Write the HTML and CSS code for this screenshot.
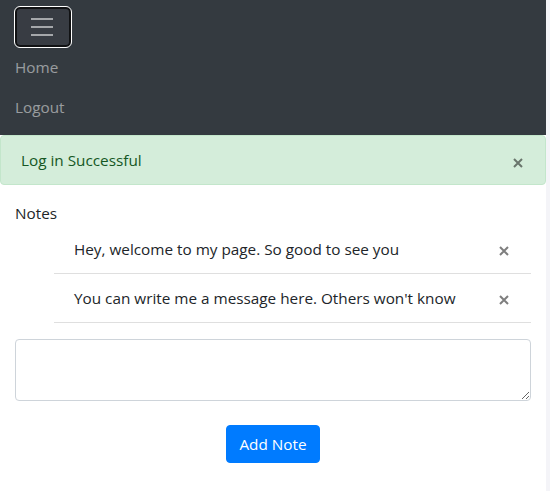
FILE: index.html
```html
<!DOCTYPE html>
<html lang="en">
<head>
<meta charset="utf-8">
<title>Notes</title>
<link rel="stylesheet" href="styles.css">
</head>
<body>
<nav class="navbar">
  <button class="toggler" type="button" aria-label="Toggle navigation">
    <svg class="toggler-icon" width="30" height="30" viewBox="0 0 30 30" aria-hidden="true">
      <path d="M4 7h22M4 15h22M4 23h22" stroke="rgba(255,255,255,0.55)" stroke-width="2" stroke-linecap="butt" fill="none"/>
    </svg>
  </button>
  <ul class="nav-links">
    <li><a class="nav-link" href="#">Home</a></li>
    <li><a class="nav-link" href="#">Logout</a></li>
  </ul>
</nav>
<div class="alert" role="alert">
  <span>Log in Successful</span>
  <button class="close" type="button" aria-label="Close">
    <svg width="10" height="10" viewBox="0 0 10 10" aria-hidden="true"><path d="M1 1L9 9M9 1L1 9" stroke="currentColor" stroke-width="2" fill="none"/></svg>
  </button>
</div>
<main class="container">
  <p class="notes-title">Notes</p>
  <ul class="notes">
    <li class="note"><span>Hey, welcome to my page. So good to see you</span><button class="close" type="button" aria-label="Delete"><svg width="10" height="10" viewBox="0 0 10 10" aria-hidden="true"><path d="M1 1L9 9M9 1L1 9" stroke="currentColor" stroke-width="2" fill="none"/></svg></button></li>
    <li class="note"><span>You can write me a message here. Others won't know</span><button class="close" type="button" aria-label="Delete"><svg width="10" height="10" viewBox="0 0 10 10" aria-hidden="true"><path d="M1 1L9 9M9 1L1 9" stroke="currentColor" stroke-width="2" fill="none"/></svg></button></li>
  </ul>
  <textarea class="note-input" rows="2"></textarea>
  <div class="actions">
    <button class="btn-primary" type="button">Add Note</button>
  </div>
</main>
</body>
</html>
```

FILE: styles.css
```css
html {
  background: #f4f4f8;
}
body {
  margin: 0;
  width: 546px;
  min-height: 491px;
  background: #ffffff;
  font-family: "Open Sans", "Liberation Sans", sans-serif;
  font-size: 15.3px;
  line-height: 24px;
  color: #212529;
}
.navbar {
  background: #343a40;
  display: flex;
  flex-direction: column;
  align-items: flex-start;
  padding: 7px 15px 8px;
}
.toggler {
  width: 56px;
  height: 40px;
  box-sizing: border-box;
  padding: 3px 10px;
  margin: 0;
  background: #383c43;
  border: 2px solid #111214;
  border-radius: 5px;
  outline: 1px solid #ffffff;
  display: flex;
  align-items: flex-start;
}
.toggler-icon {
  display: block;
}
.nav-links {
  list-style: none;
  margin: 0;
  padding: 0;
  display: flex;
  flex-direction: column;
}
.nav-link {
  display: block;
  padding: 8px 0;
  color: rgba(255, 255, 255, 0.5);
  text-decoration: none;
}
.alert {
  display: flex;
  justify-content: space-between;
  align-items: center;
  height: 50px;
  box-sizing: border-box;
  padding: 0 20px;
  background: #d4edda;
  border: 1px solid #c3e6cb;
  border-radius: 4px;
  color: #155724;
  margin-bottom: 16px;
}
.close {
  display: flex;
  background: none;
  border: 0;
  padding: 2px;
  margin: 0;
  color: #000;
  opacity: 0.5;
  cursor: pointer;
}
.close svg {
  display: block;
}
.alert .close {
  margin-top: 5px;
}
.container {
  padding: 0 15px;
}
.notes-title {
  margin: 0;
}
.notes {
  list-style: none;
  margin: 0;
  padding: 0 0 0 39px;
}
.note {
  display: flex;
  justify-content: space-between;
  align-items: center;
  padding: 12px 20px;
  border-bottom: 1px solid rgba(0, 0, 0, 0.125);
}
.note .close {
  margin-top: 4px;
}
.note-input {
  display: block;
  box-sizing: border-box;
  width: 100%;
  height: 62px;
  margin: 16px 0 0;
  padding: 6px 12px;
  font-family: inherit;
  font-size: 16px;
  line-height: 24px;
  border: 1px solid #ced4da;
  border-radius: 4px;
}
.actions {
  display: flex;
  justify-content: center;
  padding-top: 24px;
}
.btn-primary {
  height: 38px;
  width: 94px;
  padding: 0 12px;
  font-family: inherit;
  font-size: 15.3px;
  line-height: 24px;
  color: #fff;
  background: #007bff;
  border: 1px solid #007bff;
  border-radius: 4px;
}
```
